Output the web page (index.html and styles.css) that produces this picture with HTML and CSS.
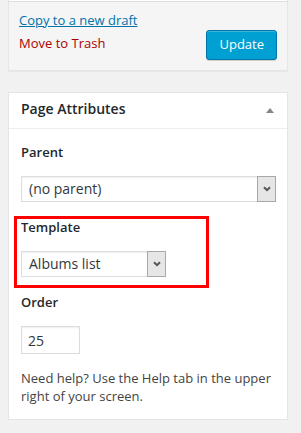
FILE: index.html
```html
<!DOCTYPE html>
<html lang="en">
<head>
  <meta charset="UTF-8" />
  <meta name="viewport" content="width=device-width, initial-scale=1.0"/>
  <title>Edit Page</title>
  <link rel="stylesheet" href="styles.css">
</head>
<body>
  <div class="postbox publish-box">
    <div class="publishing-actions">
      <div class="action-links">
        <a href="#" class="copy-draft">Copy to a new draft</a>
        <a href="#" class="trash-link">Move to Trash</a>
      </div>
      <button type="button" class="button-primary">Update</button>
    </div>
  </div>

  <div class="postbox">
    <div class="hndle">
      <h2>Page Attributes</h2>
      <span class="toggle-arrow"></span>
    </div>
    <div class="inside">
      <p class="attr-label">Parent</p>
      <div class="dropdown parent-select">
        <span class="dropdown-value">(no parent)</span>
        <span class="dropdown-button">
          <svg width="8" height="6" viewBox="0 0 8 6"><path d="M1 1.2 L4 4.2 L7 1.2" fill="none" stroke="#555" stroke-width="2"/></svg>
        </span>
      </div>

      <div class="template-block">
        <p class="attr-label">Template</p>
        <div class="dropdown template-select">
          <span class="dropdown-value">Albums list</span>
          <span class="dropdown-button">
            <svg width="8" height="6" viewBox="0 0 8 6"><path d="M1 1.2 L4 4.2 L7 1.2" fill="none" stroke="#555" stroke-width="2"/></svg>
          </span>
        </div>
      </div>

      <p class="attr-label order-label">Order</p>
      <input type="text" class="order-input" value="25">

      <p class="help-text">Need help? Use the Help tab in the upper right of your screen.</p>
    </div>
  </div>
</body>
</html>
```

FILE: styles.css
```css
*, *::before, *::after {
  box-sizing: border-box;
}

body {
  margin: 0;
  padding: 0 13px 0 8px;
  background-color: #f1f1f1;
  font-family: 'Open Sans', 'Noto Sans', sans-serif;
  font-size: 13px;
  line-height: 18px;
  color: #444;
}

.postbox {
  background: #fff;
  border: 1px solid #e5e5e5;
  box-shadow: 0 1px 1px rgba(0, 0, 0, 0.04);
}

/* publish box, cut off at the top */
.publish-box {
  border-top: 0;
  padding-top: 1px;
  margin-bottom: 21px;
}

.publishing-actions {
  display: flex;
  justify-content: space-between;
  align-items: flex-end;
  padding: 9px 10px 10px;
  background: #f5f5f5;
  border-top: 1px solid #ddd;
}

.action-links {
  display: flex;
  flex-direction: column;
  align-items: flex-start;
  gap: 5px;
  padding-bottom: 8px;
}

.copy-draft {
  color: #0073aa;
  text-decoration: underline;
}

.trash-link {
  color: #a00;
  text-decoration: none;
}

.button-primary {
  height: 30px;
  padding: 0 12px 2px;
  background: #00a0d2;
  border: 1px solid #0073aa;
  border-radius: 3px;
  box-shadow: inset 0 1px 0 rgba(120, 200, 230, 0.5), 0 1px 0 rgba(0, 0, 0, 0.15);
  color: #fff;
  font-family: inherit;
  font-size: 13px;
  line-height: 26px;
  cursor: pointer;
}

.hndle {
  display: flex;
  align-items: center;
  justify-content: space-between;
  border-bottom: 1px solid #eee;
  padding-right: 13px;
}

.hndle h2 {
  margin: 0;
  padding: 6px 12px 10px;
  font-size: 14px;
  font-weight: 600;
  line-height: 19px;
  color: #23282d;
}

.toggle-arrow {
  width: 0;
  height: 0;
  border-left: 4px solid transparent;
  border-right: 4px solid transparent;
  border-bottom: 5px solid #82878c;
  margin-top: -1px;
}

.inside {
  padding: 14px 12px 14px;
}

.attr-label {
  margin: 0;
  font-weight: 600;
  color: #23282d;
}

.dropdown {
  display: flex;
  height: 26px;
  margin-top: 15px;
  border: 1px solid #ddd;
  background: #fff;
  box-shadow: inset 0 1px 2px rgba(0, 0, 0, 0.07);
}

.parent-select {
  width: 255px;
}

.template-select {
  width: 145px;
}

.dropdown-value {
  flex: 1;
  padding-left: 7px;
  font-size: 14px;
  line-height: 24px;
  color: #32373c;
}

.dropdown-button {
  display: flex;
  align-items: center;
  justify-content: center;
  width: 19px;
  margin: -1px -1px -1px 0;
  background: #e6e6e6;
  border: 1px solid #a8a8a8;
}

.template-block {
  position: relative;
  margin-top: 16px;
}

/* red highlight drawn over the template field */
.template-block::after {
  content: '';
  position: absolute;
  top: -2px;
  left: -7px;
  width: 195px;
  height: 72px;
  border: 3px solid #f00;
}

.order-label {
  margin-top: 16px;
}

.order-input {
  display: block;
  width: 59px;
  height: 28px;
  margin-top: 15px;
  padding: 0 6px;
  border: 1px solid #ddd;
  box-shadow: inset 0 1px 2px rgba(0, 0, 0, 0.07);
  font-family: inherit;
  font-size: 14px;
  color: #32373c;
}

.help-text {
  margin: 15px 0 0;
  color: #444;
}
```
